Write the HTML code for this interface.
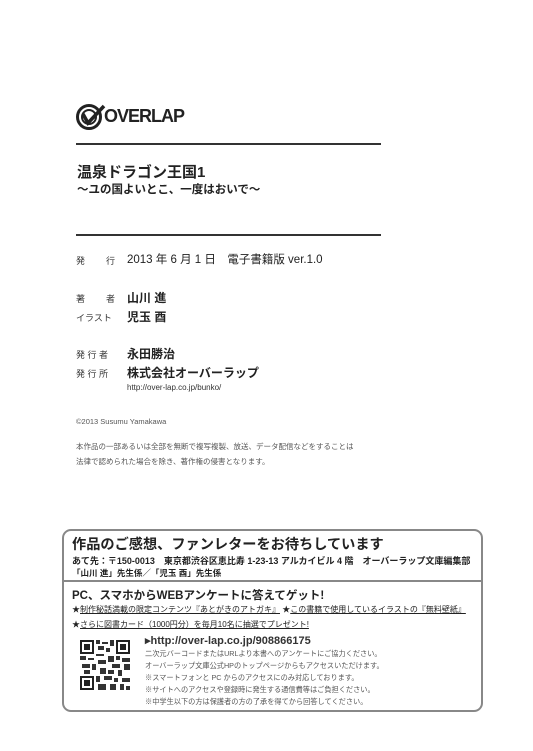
<!DOCTYPE html>
<html><head><meta charset="utf-8"><style>
body{margin:0;width:533px;height:751px;background:#fff;position:relative;overflow:hidden;font-family:"Liberation Sans","Noto Sans CJK JP",sans-serif;color:#222}
.a{position:absolute;white-space:nowrap}
.hr{position:absolute;left:76px;width:305px;height:1.5px;background:#333}
.lb{font-size:9px;color:#333}
.v{font-size:12px;font-weight:bold;color:#222}
.s{font-size:7.5px;color:#555}
</style></head><body>
<svg class="a" style="left:76px;top:103px" width="30" height="28" viewBox="0 0 30 28">
<circle cx="13" cy="14" r="11.5" fill="none" stroke="#222" stroke-width="3"/>
<circle cx="13" cy="14" r="7" fill="none" stroke="#222" stroke-width="2"/>
<path d="M7 11 L12 20 L28 3" fill="none" stroke="#222" stroke-width="3.5"/>
</svg>
<div class="a" style="left:104px;top:106px;font-size:18px;font-weight:bold;letter-spacing:-1px;color:#222">OVERLAP</div>
<div class="hr" style="top:143px"></div>
<div class="a" style="left:77px;top:161px;font-size:15px;font-weight:bold">温泉ドラゴン王国1</div>
<div class="a" style="left:77px;top:181px;font-size:11.5px;font-weight:bold">～ユの国よいとこ、一度はおいで～</div>
<div class="hr" style="top:234px"></div>
<div class="a lb" style="left:76px;top:254px">発</div><div class="a lb" style="left:106px;top:254px">行</div>
<div class="a" style="left:127px;top:251px;font-size:11.5px">2013 年 6 月 1 日　電子書籍版 ver.1.0</div>
<div class="a lb" style="left:76px;top:292px">著</div><div class="a lb" style="left:106px;top:292px">者</div>
<div class="a v" style="left:127px;top:289px">山川 進</div>
<div class="a lb" style="left:76px;top:311px">イラスト</div>
<div class="a v" style="left:127px;top:308px">児玉 酉</div>
<div class="a lb" style="left:76px;top:348px">発 行 者</div>
<div class="a v" style="left:127px;top:345px">永田勝治</div>
<div class="a lb" style="left:76px;top:367px">発 行 所</div>
<div class="a v" style="left:127px;top:364px">株式会社オーバーラップ</div>
<div class="a" style="left:127px;top:383px;font-size:8px;color:#333">http://over-lap.co.jp/bunko/</div>
<div class="a s" style="left:76px;top:417px">©2013 Susumu Yamakawa</div>
<div class="a s" style="left:76px;top:441px">本作品の一部あるいは全部を無断で複写複製、放送、データ配信などをすることは</div>
<div class="a s" style="left:76px;top:456px">法律で認められた場合を除き、著作権の侵害となります。</div>
<div class="a" style="left:62px;top:529px;width:417px;height:179px;border:2.5px solid #888;border-radius:9px"></div>
<div class="a" style="left:64px;top:580px;width:417px;height:2px;background:#888"></div>
<div class="a" style="left:72px;top:534px;font-size:14.2px;font-weight:bold">作品のご感想、ファンレターをお待ちしています</div>
<div class="a" style="left:72px;top:554px;font-size:9px;font-weight:bold">あて先：〒150-0013　東京都渋谷区恵比寿 1-23-13 アルカイビル 4 階　オーバーラップ文庫編集部</div>
<div class="a" style="left:72px;top:567px;font-size:8.5px;font-weight:bold">「山川 進」先生係／「児玉 酉」先生係</div>
<div class="a" style="left:72px;top:587px;font-size:11.5px;font-weight:bold">PC、スマホからWEBアンケートに答えてゲット!</div>
<div class="a" style="left:72px;top:604px;font-size:8px">★<u>制作秘話満載の限定コンテンツ『あとがきのアトガキ』</u> ★<u>この書籍で使用しているイラストの『無料壁紙』</u></div>
<div class="a" style="left:72px;top:619px;font-size:8px">★<u>さらに図書カード（1000円分）を毎月10名に抽選でプレゼント!</u></div>
<svg class="a" style="left:80px;top:640px" width="50" height="50" viewBox="0 0 25 25" shape-rendering="crispEdges">
<rect x="0" y="0" width="7" height="7" fill="#222"/><rect x="1" y="1" width="5" height="5" fill="#fff"/><rect x="2" y="2" width="3" height="3" fill="#222"/>
<rect x="18" y="0" width="7" height="7" fill="#222"/><rect x="19" y="1" width="5" height="5" fill="#fff"/><rect x="20" y="2" width="3" height="3" fill="#222"/>
<rect x="0" y="18" width="7" height="7" fill="#222"/><rect x="1" y="19" width="5" height="5" fill="#fff"/><rect x="2" y="20" width="3" height="3" fill="#222"/>
<path fill="#333" d="M8 0h2v2h-2zM11 1h3v1h-3zM15 0h2v3h-2zM9 3h3v2h-3zM13 4h2v2h-2zM8 7h4v1h-4zM0 8h3v2h-3zM4 9h3v1h-3zM14 8h3v3h-3zM18 8h2v2h-2zM21 9h4v2h-4zM9 10h4v2h-4zM1 12h4v2h-4zM6 12h2v3h-2zM16 12h4v2h-4zM22 12h3v3h-3zM10 14h3v3h-3zM2 15h3v2h-3zM14 15h3v2h-3zM19 15h2v3h-2zM8 18h2v3h-2zM12 18h4v2h-4zM17 19h2v2h-2zM21 19h4v2h-4zM9 22h4v3h-4zM15 22h3v3h-3zM20 22h2v3h-2zM23 23h2v2h-2z"/>
</svg>
<div class="a" style="left:145px;top:634px;font-size:11px;font-weight:bold;color:#333">▸http://over-lap.co.jp/908866175</div>
<div class="a s" style="left:145px;top:649px;font-size:7.2px">二次元バーコードまたはURLより本書へのアンケートにご協力ください。</div>
<div class="a s" style="left:145px;top:661px;font-size:7.2px">オーバーラップ文庫公式HPのトップページからもアクセスいただけます。</div>
<div class="a s" style="left:145px;top:673px;font-size:7.2px">※スマートフォンと PC からのアクセスにのみ対応しております。</div>
<div class="a s" style="left:145px;top:685px;font-size:7.2px">※サイトへのアクセスや登録時に発生する通信費等はご負担ください。</div>
<div class="a s" style="left:145px;top:697px;font-size:7.2px">※中学生以下の方は保護者の方の了承を得てから回答してください。</div>
</body></html>
